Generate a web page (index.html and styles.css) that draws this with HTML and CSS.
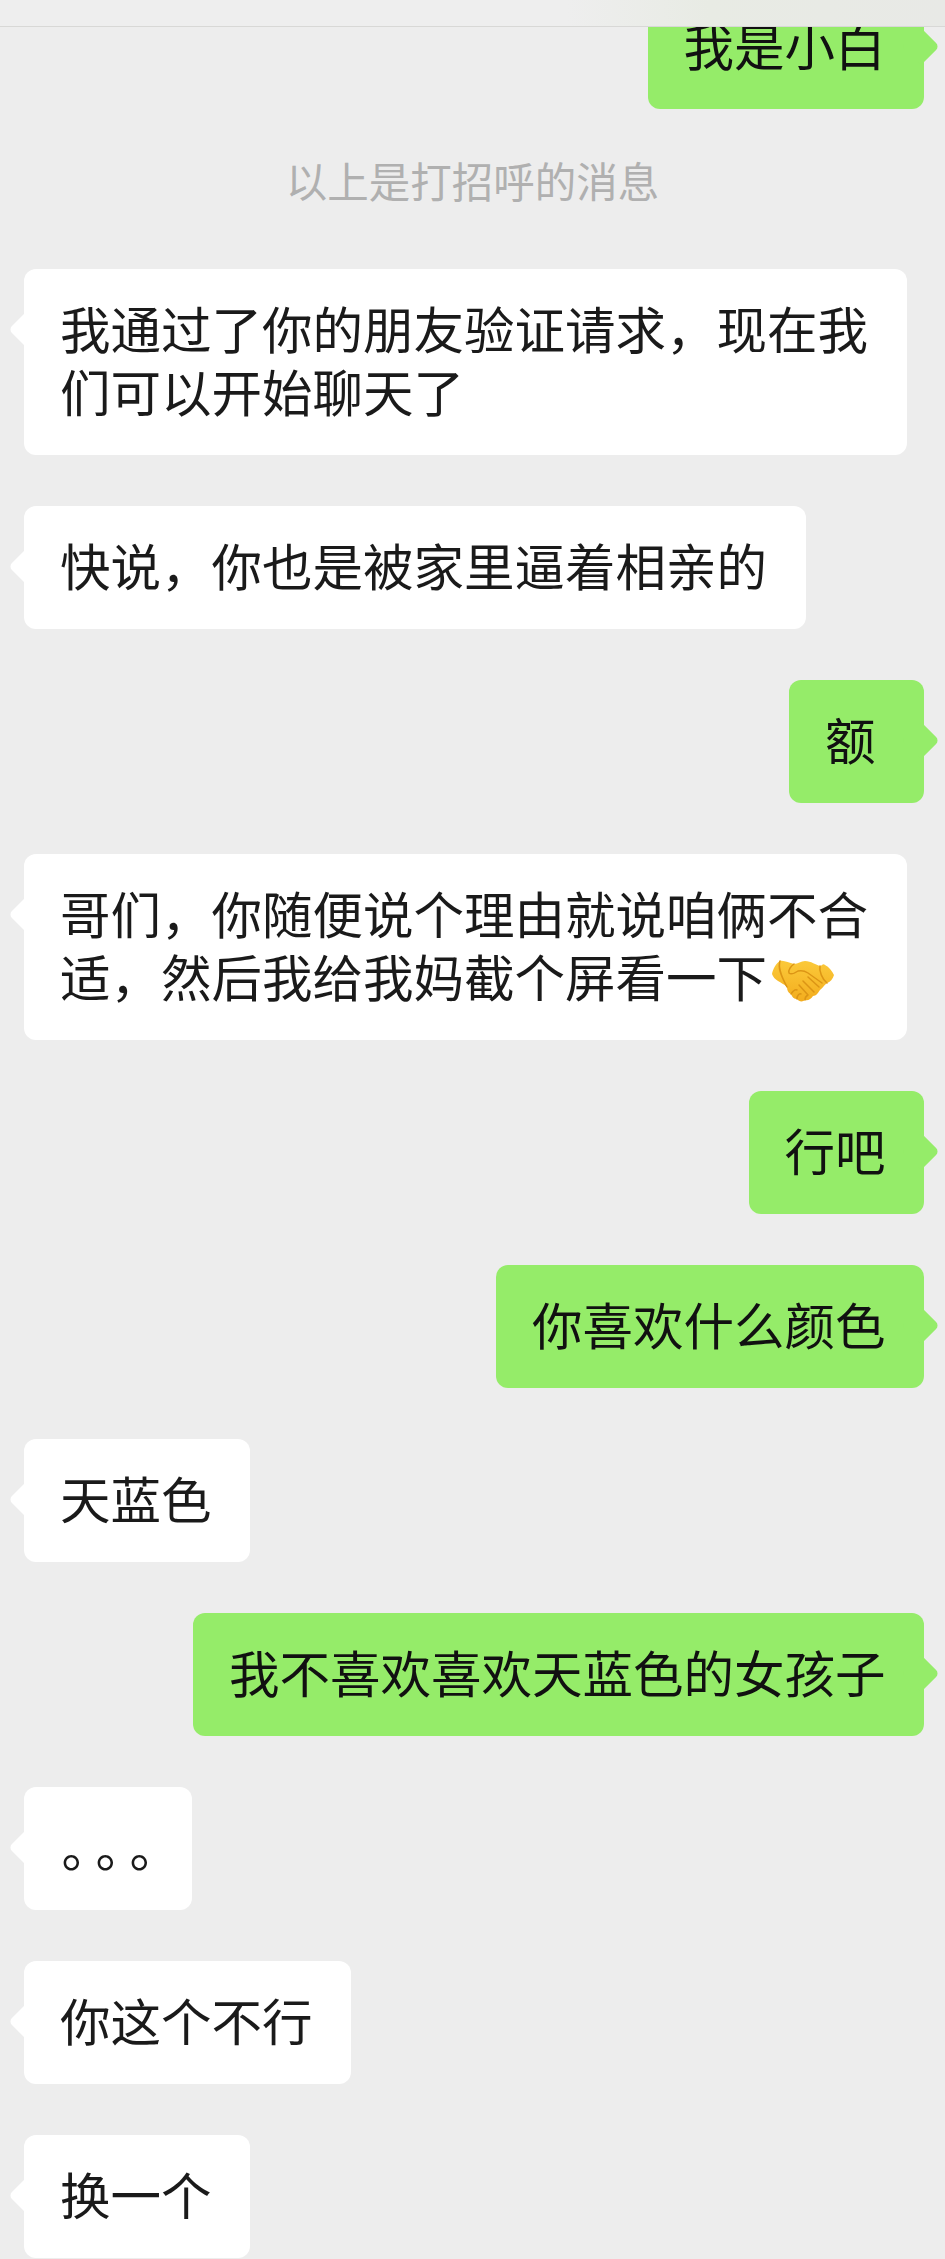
FILE: index.html
```html
<!DOCTYPE html>
<html lang="zh">
<head>
<meta charset="utf-8">
<meta name="viewport" content="width=device-width, initial-scale=1">
<title>聊天</title>
<link rel="stylesheet" href="styles.css">
</head>
<body>

<div class="topbar"></div>

<div class="chat">
  <div class="msg me">我是小白</div>
  <div class="notice">以上是打招呼的消息</div>
  <div class="msg other">我通过了你的朋友验证请求，现在我们可以开始聊天了</div>
  <div class="msg other">快说，你也是被家里逼着相亲的</div>
  <div class="msg me">额</div>
  <div class="msg other">哥们，你随便说个理由就说咱俩不合适，然后我给我妈截个屏看一下<svg class="emoji" viewBox="0 0 62 42" width="62" height="42" role="img" aria-label="握手">
      <defs>
        <linearGradient id="skin" x1="0" y1="0" x2="0" y2="1">
          <stop offset="0" stop-color="#fbc93a"/>
          <stop offset="1" stop-color="#f3ad1e"/>
        </linearGradient>
      </defs>
      <path class="hand" d="M0 14 C1 9 4 3 8 1 C12 0 17 3 22 4 C26 4 29 1 33 1 C39 1 44 5 48 6 C50 6 51 3 53 5 C57 7 60 11 62 15 C61 19 58 22 55 23 C52 25 51 28 48 30 C46 33 44 36 41 36 C39 39 36 41 33 40 C31 42 27 42 25 39 C22 39 20 37 19 34 C16 33 15 30 15 27 C12 24 9 23 6 21 C3 19 1 17 0 14 Z"/>
      <path class="fold" d="M22 4 C19 6 16 10 17 13 C19 15 23 13 26 11 C30 10 33 11 36 13 L50 23"/>
      <path class="fold" d="M36 17 L47 27 M31 21 L42 32 M27 25 L36 35 M19 34 C21 31 23 29 25 30 M25 39 C25 36 27 33 29 34 M33 40 C33 38 34 36 36 35"/>
      <path class="fold" d="M48 6 C47 11 50 19 55 23"/>
      <path class="fold" d="M8 1 C6 7 8 14 15 27"/>
    </svg></div>
  <div class="msg me">行吧</div>
  <div class="msg me">你喜欢什么颜色</div>
  <div class="msg other">天蓝色</div>
  <div class="msg me">我不喜欢喜欢天蓝色的女孩子</div>
  <div class="msg other dots">。。。</div>
  <div class="msg other">你这个不行</div>
  <div class="msg other">换一个</div>
</div>

</body>
</html>
```

FILE: styles.css
```css
* {
  box-sizing: border-box;
}

html, body {
  height: 2259px;
  overflow: hidden;
}

body {
  margin: 0;
  position: relative;
  background: #ededed;
  font-family: "Noto Sans CJK SC", "Liberation Sans", sans-serif;
}

.topbar {
  position: absolute;
  top: 0;
  left: 0;
  right: 0;
  height: 27px;
  z-index: 2;
  background: linear-gradient(90deg, #eeeeee 60%, #e8ebe4 75%, #e8e9e6 100%);
  border-bottom: 1px solid #d8d8d6;
}

.chat {
  display: flex;
  flex-direction: column;
  gap: 51px;
  padding: 0 21px 0 24px;
  margin-top: -14px;
}

/* Message bubble */
.msg {
  position: relative;
  max-width: 883px;
  min-width: 135px;
  padding: 27px 38.5px 33px 36px;
  border-radius: 12px;
  font-size: 50.5px;
  line-height: 63px;
}

.msg::before {
  content: "";
  position: absolute;
  top: 47px;
  width: 27px;
  height: 27px;
  border-radius: 5px;
  transform: rotate(45deg);
}

.other {
  align-self: flex-start;
  background: #fff;
  color: #1a1a1a;
}

.other::before {
  left: -10px;
  background: #fff;
}

.me {
  align-self: flex-end;
  background: #95ec69;
  color: #111;
}

.me::before {
  right: -10px;
  background: #95ec69;
}

/* Three round stops sit closer than a full em */
.dots {
  width: 168px;
  padding-left: 37.5px;
  letter-spacing: -16.5px;
  white-space: nowrap;
  text-spacing-trim: space-all;
}

/* "以上是打招呼的消息" */
.notice {
  margin: -10px 3px 8px 0;
  font-size: 41.5px;
  line-height: 60px;
  text-align: center;
  color: #b0b0b0;
}

.emoji {
  margin-left: 5px;
  vertical-align: -5px;
}

.hand {
  fill: url(#skin);
}

.fold {
  fill: none;
  stroke: #dc9515;
  stroke-width: 1.5;
  stroke-linecap: round;
  stroke-linejoin: round;
}
```
